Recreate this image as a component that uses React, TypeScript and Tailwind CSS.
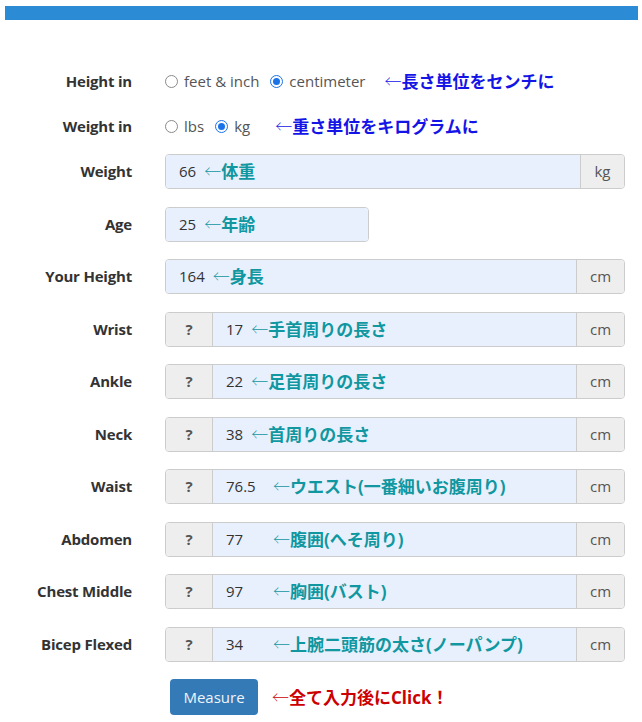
import React from "react";

const font = { fontFamily: '"Open Sans", "Noto Sans CJK JP", sans-serif' };

type Row = {
  label: string;
  value: string;
  note: string;
  unit?: string;
  help?: boolean;
  wide?: boolean;
  short?: boolean;
};

const rows: Row[] = [
  { label: "Weight", value: "66", note: "体重", unit: "kg" },
  { label: "Age", value: "25", note: "年齢", short: true },
  { label: "Your Height", value: "164", note: "身長", unit: "cm" },
  { label: "Wrist", value: "17", help: true, note: "手首周りの長さ", unit: "cm" },
  { label: "Ankle", value: "22", help: true, note: "足首周りの長さ", unit: "cm" },
  { label: "Neck", value: "38", help: true, note: "首周りの長さ", unit: "cm" },
  { label: "Waist", value: "76.5", help: true, wide: true, note: "ウエスト(一番細いお腹周り)", unit: "cm" },
  { label: "Abdomen", value: "77", help: true, wide: true, note: "腹囲(へそ周り)", unit: "cm" },
  { label: "Chest Middle", value: "97", help: true, wide: true, note: "胸囲(バスト)", unit: "cm" },
  { label: "Bicep Flexed", value: "34", help: true, wide: true, note: "上腕二頭筋の太さ(ノーパンプ)", unit: "cm" },
];

// 注記: 矢印だけ細字、本文は太字
function Note({ text, color, className = "" }: { text: string; color: string; className?: string }) {
  return (
    <span className={`${className} ${color} text-[17px] whitespace-nowrap`}>
      <span className="font-[100]" style={{ fontFamily: '"Noto Sans CJK JP", sans-serif' }}>←</span>
      <span className="font-bold">{text}</span>
    </span>
  );
}

function Radio({ checked, label }: { checked?: boolean; label: string }) {
  return (
    <span className="flex items-center gap-[6px]">
      <span
        className={[
          "w-[13px] h-[13px] rounded-full border flex items-center justify-center bg-white",
          checked ? "border-[#1a73e8]" : "border-[#8a8a8a]",
        ].join(" ")}
      >
        {checked && <span className="w-[7px] h-[7px] rounded-full bg-[#1a73e8]" />}
      </span>
      <span className="text-[15px] text-[#555]">{label}</span>
    </span>
  );
}

function Label({ children }: { children: React.ReactNode }) {
  return (
    <div className="w-[132px] shrink-0 text-right text-[15px] font-bold text-[#333] tracking-[-0.2px]">{children}</div>
  );
}

export default function App() {
  return (
    <div className="bg-white w-[642px] h-[722px] pt-[6px]" style={font}>
      <div className="mx-[5px] w-[633px] h-[14px] bg-[#2b8bd5]" />

      <div className="mt-[44px]">
        {/* unit selectors */}
        <div className="flex items-center h-[35px]">
          <Label>Height in</Label>
          <div className="ml-[33px] flex items-center gap-[11px]">
            <Radio label="feet & inch" />
            <Radio checked label="centimeter" />
            <Note className="ml-[8px]" color="text-[#1414e6]" text="長さ単位をセンチに" />
          </div>
        </div>
        <div className="flex items-center h-[35px] mt-[10px]">
          <Label>Weight in</Label>
          <div className="ml-[33px] flex items-center gap-[11px]">
            <Radio label="lbs" />
            <Radio checked label="kg" />
            <Note className="ml-[14px]" color="text-[#1414e6]" text="重さ単位をキログラムに" />
          </div>
        </div>

        {/* measurement inputs */}
        <div className="mt-[10px] flex flex-col gap-[17.5px]">
          {rows.map((r) => (
            <div key={r.label} className="flex items-center h-[35px]">
              <Label>{r.label}</Label>
              <div
                className={[
                  "ml-[33px] h-full flex border border-[#ccc] rounded-[4px] overflow-hidden",
                  r.short ? "w-[204px]" : "w-[460px]",
                ].join(" ")}
              >
                {r.help && (
                  <div className="w-[47px] shrink-0 bg-[#eee] border-r border-[#ccc] flex items-center justify-center text-[15px] font-bold text-[#555]">
                    ?
                  </div>
                )}
                <div className="flex-1 bg-[#e8f0fe] flex items-center px-[13px]">
                  <span className={`${r.wide ? "w-[47px]" : "mr-[8px]"} text-[15px] text-[#333]`}>{r.value}</span>
                  <Note color="text-[#10979f]" text={r.note} />
                </div>
                {r.unit && (
                  <div
                    className={[
                      "shrink-0 bg-[#eee] border-l border-[#ccc] flex items-center justify-center text-[15px] text-[#555]",
                      r.unit === "kg" ? "w-[44px]" : "w-[48px]",
                    ].join(" ")}
                  >
                    {r.unit}
                  </div>
                )}
              </div>
            </div>
          ))}

          <div className="flex items-center h-[36px]">
            <div className="w-[132px] shrink-0" />
            <button className="ml-[38px] h-full w-[88px] rounded-[4px] bg-[#337ab7] text-[#f0f4f8] text-[15px]">
              Measure
            </button>
            <Note className="ml-[14px]" color="text-[#cc0000]" text="全て入力後にClick！" />
          </div>
        </div>
      </div>
    </div>
  );
}
